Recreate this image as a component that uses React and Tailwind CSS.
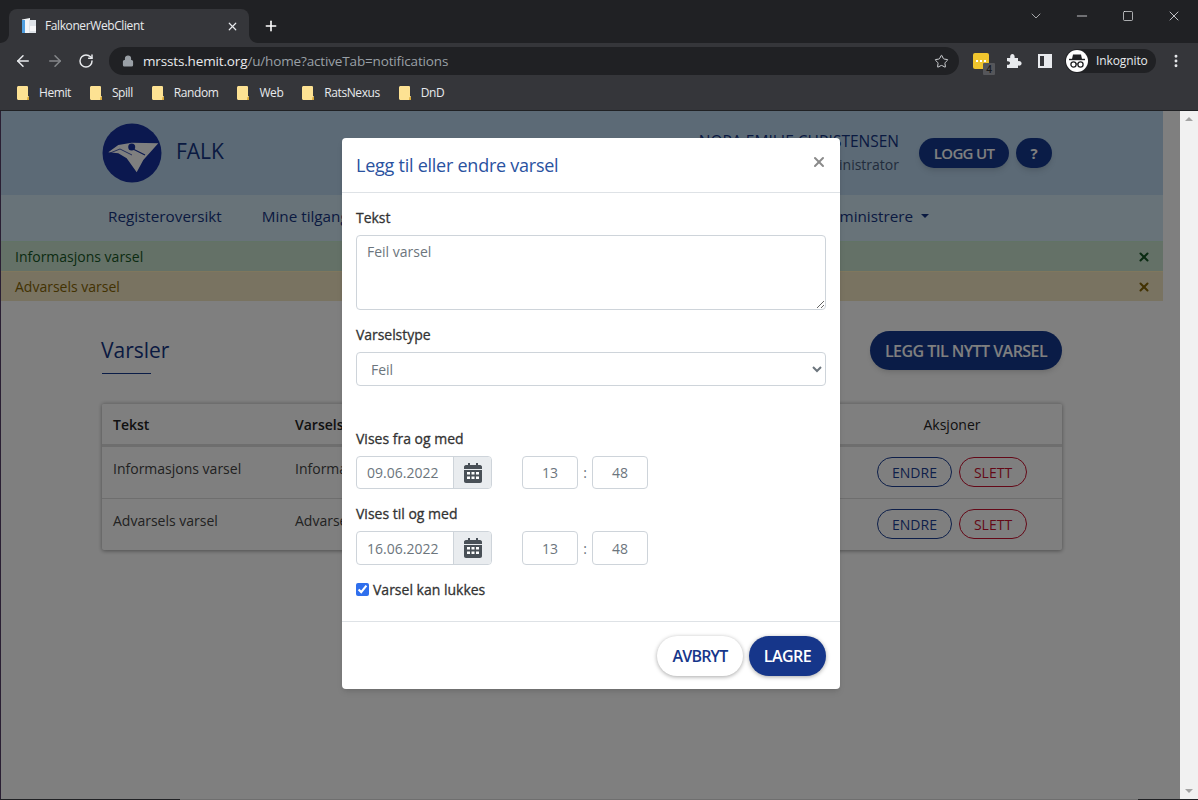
import { ArrowLeft, ArrowRight, RotateCw, Lock, Star, X, Plus, ChevronDown, Minus, Square, MoreVertical } from "lucide-react";

const BOOKMARKS = ["Hemit", "Spill", "Random", "Web", "RatsNexus", "DnD"];

const sans = "font-['Open_Sans',sans-serif]";

const FolderIcon = () => (
  <svg width="12" height="14" viewBox="0 0 12 14">
    <path d="M0 1.500C0 .7.7 0 1.500 0H8l2 0c1 0 1 1 1 1.500V10l1 .5V14H1.500C.7 14 0 13.300 0 12.500z" fill="#fde293" />
    <path d="M10.500 11H12v3h-2z" fill="#d9a93a" />
  </svg>
);

const Favicon = () => (
  <svg width="16" height="16" viewBox="0 0 16 16">
    <path d="M1 1.500 9 0v15H1z" fill="#f2f5f8" />
    <path d="M1 2h3v13H1z" fill="#4f9fe0" />
    <path d="M8 2h7v13H8z" fill="#dfe4e9" />
    <path d="M9 8h6v5H9z" fill="#f7f8f9" />
  </svg>
);

const TabFlare = ({ flip }) => (
  <svg width="9" height="9" viewBox="0 0 9 9" className={`absolute bottom-0 ${flip ? "-right-[9px] -scale-x-100" : "-left-[9px]"}`}>
    <path d="M9 0v9H0c5 0 9-4 9-9z" fill="#35363a" />
  </svg>
);

const IncognitoIcon = () => (
  <span className="flex h-[22px] w-[22px] items-center justify-center rounded-full bg-white">
    <svg width="18" height="16" viewBox="0 0 18 16">
      <path d="M5 1.500h8l1 4.500H4z" fill="#202124" />
      <path d="M1 6.500h16" stroke="#202124" strokeWidth="1.400" />
      <circle cx="5.500" cy="11.500" r="2.600" fill="none" stroke="#202124" strokeWidth="1.300" />
      <circle cx="12.500" cy="11.500" r="2.600" fill="none" stroke="#202124" strokeWidth="1.300" />
      <path d="M8 11h2" stroke="#202124" strokeWidth="1.200" />
    </svg>
  </span>
);

const PuzzleIcon = () => (
  <svg width="16" height="16" viewBox="0 0 16 16">
    <path d="M1 5h3.200C3.800 2.600 5 1 6.400 1s2.600 1.600 2.200 4H12v3.200c2.400-.4 3.600.8 3.600 2.200S14.400 13 12 12.600V15H1v-3.300c2 .4 3-.6 3-1.700S3 7.900 1 8.300z" fill="#e8eaed" />
  </svg>
);

const ChromeBar = () => (
  <div className={`shrink-0 bg-[#35363a] ${sans}`}>
    <div className="flex h-[43px] items-end bg-[#202124] pl-[9px]">
      <div className="relative flex h-[34px] w-[240px] items-center rounded-t-lg bg-[#35363a] pl-3 pr-[10px]">
        <TabFlare />
        <TabFlare flip />
        <Favicon />
        <span className="ml-2 text-[12px] tracking-[-0.4px] text-[#e8eaed]">FalkonerWebClient</span>
        <X className="ml-auto text-[#e8eaed]" size={13} strokeWidth={2.2} />
      </div>
      <Plus className="mb-[9px] ml-[14px] text-white" size={16} strokeWidth={2.4} />
      <div className="mb-[19px] ml-auto flex items-center gap-[30px] pr-[16px] text-[#e8eaed]">
        <ChevronDown size={16} strokeWidth={1} />
        <Minus size={16} strokeWidth={1.2} />
        <Square size={12} strokeWidth={1.4} className="mx-[2px]" />
        <X size={16} strokeWidth={1.2} />
      </div>
    </div>
    <div className="flex h-[36px] items-center pl-[14px] pr-[14px]">
      <ArrowLeft className="text-[#e8eaed]" size={18} strokeWidth={2} />
      <ArrowRight className="ml-[14px] text-[#85878a]" size={18} strokeWidth={2} />
      <RotateCw className="ml-[14px] text-[#e8eaed]" size={16} strokeWidth={2.2} />
      <div className="ml-[15px] flex h-[28px] w-[850px] shrink-0 items-center rounded-full bg-[#202124] pl-[13px] pr-[10px]">
        <Lock className="fill-[#9aa0a6] text-[#9aa0a6]" size={12} strokeWidth={2.4} />
        <span className="ml-[9px] text-[13.5px] tracking-[-0.15px] text-[#e8eaed]">
          mrssts.hemit.org<span className="text-[#9aa0a6]">/u/home?activeTab=notifications</span>
        </span>
        <Star className="ml-auto text-[#d0d2d5]" size={15} strokeWidth={1.6} />
      </div>
      <div className="relative ml-[14px] h-[16px] w-[16px] shrink-0 rounded-[2px] bg-[#f0c52e]">
        <span className="absolute left-[3px] top-[7px] h-[2px] w-[10px] border-t-2 border-dotted border-white" />
        <span className="absolute -right-[6px] -bottom-[6px] flex h-[12px] w-[12px] items-center justify-center rounded-[1px] bg-[#55565a] text-[10px] font-semibold text-[#1a1a1a]">4</span>
      </div>
      <span className="ml-[17px]"><PuzzleIcon /></span>
      <div className="ml-[16px] flex h-[14px] w-[14px] shrink-0 justify-end border-2 border-[#e8eaed]">
        <span className="h-full w-[6px] bg-[#e8eaed]" />
      </div>
      <div className="ml-[13px] flex h-[24px] w-[91px] shrink-0 items-center rounded-full bg-[#202124] pl-[1px]">
        <IncognitoIcon />
        <span className="ml-[8px] text-[12px] tracking-[-0.1px] text-[#e8eaed]">Inkognito</span>
      </div>
      <MoreVertical className="ml-[12px] shrink-0 text-[#e8eaed]" size={16} strokeWidth={2.4} />
    </div>
    <div className="flex h-[32px] items-center gap-[19px] border-b border-[#202124] pb-[3px] pl-[17px]">
      {BOOKMARKS.map((name) => (
        <div className="flex items-center gap-[10px]" key={name}>
          <FolderIcon />
          <span className="text-[12px] tracking-[-0.42px] text-[#e8eaed]">{name}</span>
        </div>
      ))}
    </div>
  </div>
);

const FalkLogo = () => (
  <svg width="60" height="60" viewBox="0 0 60 60" className="shrink-0">
    <circle cx="30" cy="30" r="29.500" fill="#16309f" />
    <path d="M56.300 20.300 29.700 19.700 16.300 22 6.300 29.300 16.300 30.300 24.700 35.300 34.700 49.300 41.300 37z" fill="#fff" />
    <circle cx="29.700" cy="24" r="3.500" fill="#16309f" />
    <path d="M29 25 43 32" stroke="#16309f" strokeWidth="1.200" />
    <path d="M8 30 18 26 30 32" fill="none" stroke="#16309f" strokeWidth="0.800" />
  </svg>
);

const PageBehind = () => (
  <div className="w-[1162px] text-[14px] text-[#333]">
    <div className="flex h-[84px] items-center bg-[#b8d4ec] pl-[101px]">
      <FalkLogo />
      <span className="mb-[3px] ml-[14px] text-[21px] text-[#153583]">FALK</span>
      <div className="ml-auto mr-[20px] text-right leading-[23px]">
        <div className="text-[15.5px] text-[#153583]">NORA EMILIE CHRISTENSEN</div>
        <div className="text-[14px] text-[#44597a]">Systemadministrator</div>
      </div>
      <button className="h-[30px] w-[90px] rounded-full bg-[#14398f] text-[15px] font-semibold tracking-[-0.7px] text-white shadow-md">LOGG UT</button>
      <button className="ml-[7px] mr-[111px] h-[30px] w-[36px] rounded-full bg-[#14398f] text-[15px] font-bold text-white shadow-md">?</button>
    </div>
    <div className="flex h-[46px] items-center gap-10 bg-[#d0e6f2] pb-[4px] pl-[107px] pr-[234px] text-[15.25px] text-[#153583]">
      <span>Registeroversikt</span>
      <span>Mine tilganger</span>
      <span className="ml-auto flex items-center gap-[8px]">
        Administrere
        <span className="h-0 w-0 border-x-[4.5px] border-t-[4.5px] border-x-transparent border-t-[#153583]" />
      </span>
    </div>
    <div className="flex h-[30px] items-center justify-between border-t border-[#c3e6cb] bg-[#c9e2cf] pl-[14px] pr-[12px] text-[#155724]">
      Informasjons varsel
      <X className="text-[#155724]" size={14} strokeWidth={3.5} />
    </div>
    <div className="flex h-[30px] items-center justify-between border-t border-[#ffeeba] bg-[#f2e6c2] pl-[14px] pr-[12px] text-[#856404]">
      Advarsels varsel
      <X className="text-[#856404]" size={14} strokeWidth={3.5} />
    </div>
    <div className="px-[101px] pt-[30px]">
      <div className="flex items-start justify-between">
        <div className="pt-[4px]">
          <h1 className="-ml-[1px] text-[21px] leading-[30px] text-[#153583]">Varsler</h1>
          <div className="mt-[8px] h-[1px] w-[49px] bg-[#14398f]" />
        </div>
        <button className="h-[39px] w-[192px] rounded-full bg-[#14398f] text-[16px] font-semibold tracking-[-0.55px] text-white shadow-md">LEGG TIL NYTT VARSEL</button>
      </div>
      <div className="mt-[29px] rounded-[2px] border-t border-[#ddd] shadow-[0_1px_4px_rgba(0,0,0,0.4)]">
        <div className="grid h-[43px] grid-cols-[183px_1fr_220px] items-center border-b-[3px] border-[#ddd] pt-[1px] font-semibold text-[#222]">
          <span className="pl-[11px]">Tekst</span>
          <span className="pl-[10px]">Varselstype</span>
          <span className="text-center font-normal">Aksjoner</span>
        </div>
        {[
          ["Informasjons varsel", "Informasjon"],
          ["Advarsels varsel", "Advarsel"],
        ].map(([text, type], i) => (
          <div className={`grid grid-cols-[183px_1fr_220px] ${i === 0 ? "h-[52px] border-b border-[#ddd]" : "h-[51px]"}`} key={text}>
            <span className="pl-[11px] pt-[11px] text-[#444]">{text}</span>
            <span className="pl-[10px] pt-[11px] text-[#444]">{type}</span>
            <div className="flex justify-center gap-[7px] pt-[10px]">
              <button className="h-[30px] w-[75px] rounded-full border border-[#1c3f94] text-[14px] text-[#1c3f94]">ENDRE</button>
              <button className="h-[30px] w-[68px] rounded-full border border-[#c8102e] text-[14px] text-[#c8102e]">SLETT</button>
            </div>
          </div>
        ))}
      </div>
    </div>
  </div>
);

const CalendarIcon = () => (
  <svg width="18" height="20" viewBox="0 0 18 20">
    <path d="M4 0h2v3H4zM12 0h2v3h-2z" fill="#495057" />
    <path d="M0 4c0-1 .7-2 2-2h14c1.300 0 2 1 2 2v2H0zM0 7h18v11c0 1-.7 2-2 2H2c-1.300 0-2-1-2-2z" fill="#495057" />
    <path d="M3 9h3v2.500H3zM7.500 9h3v2.500h-3zM12 9h3v2.500h-3zM3 13.500h3V16H3zM7.500 13.500h3V16h-3zM12 13.500h3V16h-3z" fill="#fff" />
  </svg>
);

const DateTimeRow = ({ date, height }) => (
  <div className={`flex items-center ${height}`}>
    <div className="flex h-full w-[136px] overflow-hidden rounded-[4px] border border-[#ced4da]">
      <span className="flex flex-1 items-center pl-[10px] text-[#6c757d]">{date}</span>
      <span className="flex w-[38px] items-center justify-center border-l border-[#ced4da] bg-[#e9ecef]"><CalendarIcon /></span>
    </div>
    <span className="ml-[30px] flex h-full w-[56px] items-center justify-center rounded-[4px] border border-[#ced4da] text-[#6c757d]">13</span>
    <span className="w-[14px] text-center text-[#6c757d]">:</span>
    <span className="flex h-full w-[56px] items-center justify-center rounded-[4px] border border-[#ced4da] text-[#6c757d]">48</span>
  </div>
);

const Modal = () => (
  <div className={`absolute left-[341px] top-[27px] h-[551px] w-[498px] rounded-[4px] bg-white text-[14px] shadow-md ${sans}`}>
    <div className="flex h-[55px] items-center justify-between border-b border-[#dee2e6] pl-[14px] pr-[13px]">
      <h2 className="text-[18px] tracking-[-0.25px] text-[#2a529f]">Legg til eller endre varsel</h2>
      <X className="-mt-[6px] text-[#8a8a8a]" size={16} strokeWidth={3} />
    </div>
    <div className="px-[14px]">
      <label className="mt-[15px] block leading-[19px] tracking-[-0.05px] text-[#333] [-webkit-text-stroke:0.3px]">Tekst</label>
      <textarea
        className="mt-[8px] block h-[75px] w-full rounded-[4px] border border-[#ced4da] px-[10px] py-[5px] text-[14px] text-[#6c757d]"
        defaultValue="Feil varsel"
      />
      <label className="mt-[15px] block leading-[19px] tracking-[-0.05px] text-[#333] [-webkit-text-stroke:0.3px]">Varselstype</label>
      <select className="mt-[8px] block h-[34px] w-full rounded-[4px] border border-[#ced4da] bg-white pl-[10px] pr-[4px] text-[14px] text-[#6c757d]" defaultValue="Feil">
        <option>Feil</option>
        <option>Advarsel</option>
        <option>Informasjon</option>
      </select>
      <label className="mt-[43px] block leading-[19px] text-[#333] [-webkit-text-stroke:0.3px]">Vises fra og med</label>
      <div className="mt-[8px]"><DateTimeRow date="09.06.2022" height="h-[33px]" /></div>
      <label className="mt-[15px] block leading-[19px] text-[#333] [-webkit-text-stroke:0.3px]">Vises til og med</label>
      <div className="mt-[8px]"><DateTimeRow date="16.06.2022" height="h-[34px]" /></div>
      <label className="mt-[15px] flex items-center gap-[4px] leading-[19px] text-[#333] [-webkit-text-stroke:0.3px]">
        <input type="checkbox" defaultChecked className="h-[13px] w-[13px] accent-[#2f6fed]" />
        Varsel kan lukkes
      </label>
    </div>
    <div className="mt-[22px] flex h-[68px] items-start justify-end gap-[6px] border-t border-[#dee2e6] pr-[14px] pt-[14px]">
      <button className="h-[40px] w-[86px] rounded-full bg-white text-[16px] font-semibold tracking-[-0.8px] text-[#16368a] shadow-[0_1px_4px_rgba(0,0,0,0.35)]">AVBRYT</button>
      <button className="h-[40px] w-[77px] rounded-full bg-[#16368a] text-[16px] font-semibold tracking-[-0.5px] text-white shadow-[0_1px_4px_rgba(0,0,0,0.35)]">LAGRE</button>
    </div>
  </div>
);

export default function App() {
  return (
    <div className="flex h-[800px] w-[1198px] flex-col overflow-hidden bg-[#202124]">
      <ChromeBar />
      <div className="flex h-[688px]">
        <div className="w-[1px] bg-[#2a1f33]" />
        <div className={`relative w-[1179px] overflow-hidden bg-white ${sans}`}>
          <PageBehind />
          <div className="absolute inset-0 bg-black/50" />
          <Modal />
        </div>
        <div className="flex w-[18px] flex-col items-center justify-between bg-[#f1f1f1] py-[6px]">
          <span className="h-0 w-0 border-x-[4px] border-b-[4px] border-x-transparent border-b-[#a3a3a3]" />
          <span className="h-0 w-0 border-x-[4px] border-t-[4px] border-x-transparent border-t-[#a3a3a3]" />
        </div>
      </div>
      <div className="flex h-[1px]">
        <div className="w-[180px] bg-[#202124]" />
        <div className="flex-1 bg-[#6f6f6f]" />
        <div className="w-[60px] bg-[#202124]" />
      </div>
    </div>
  );
}
